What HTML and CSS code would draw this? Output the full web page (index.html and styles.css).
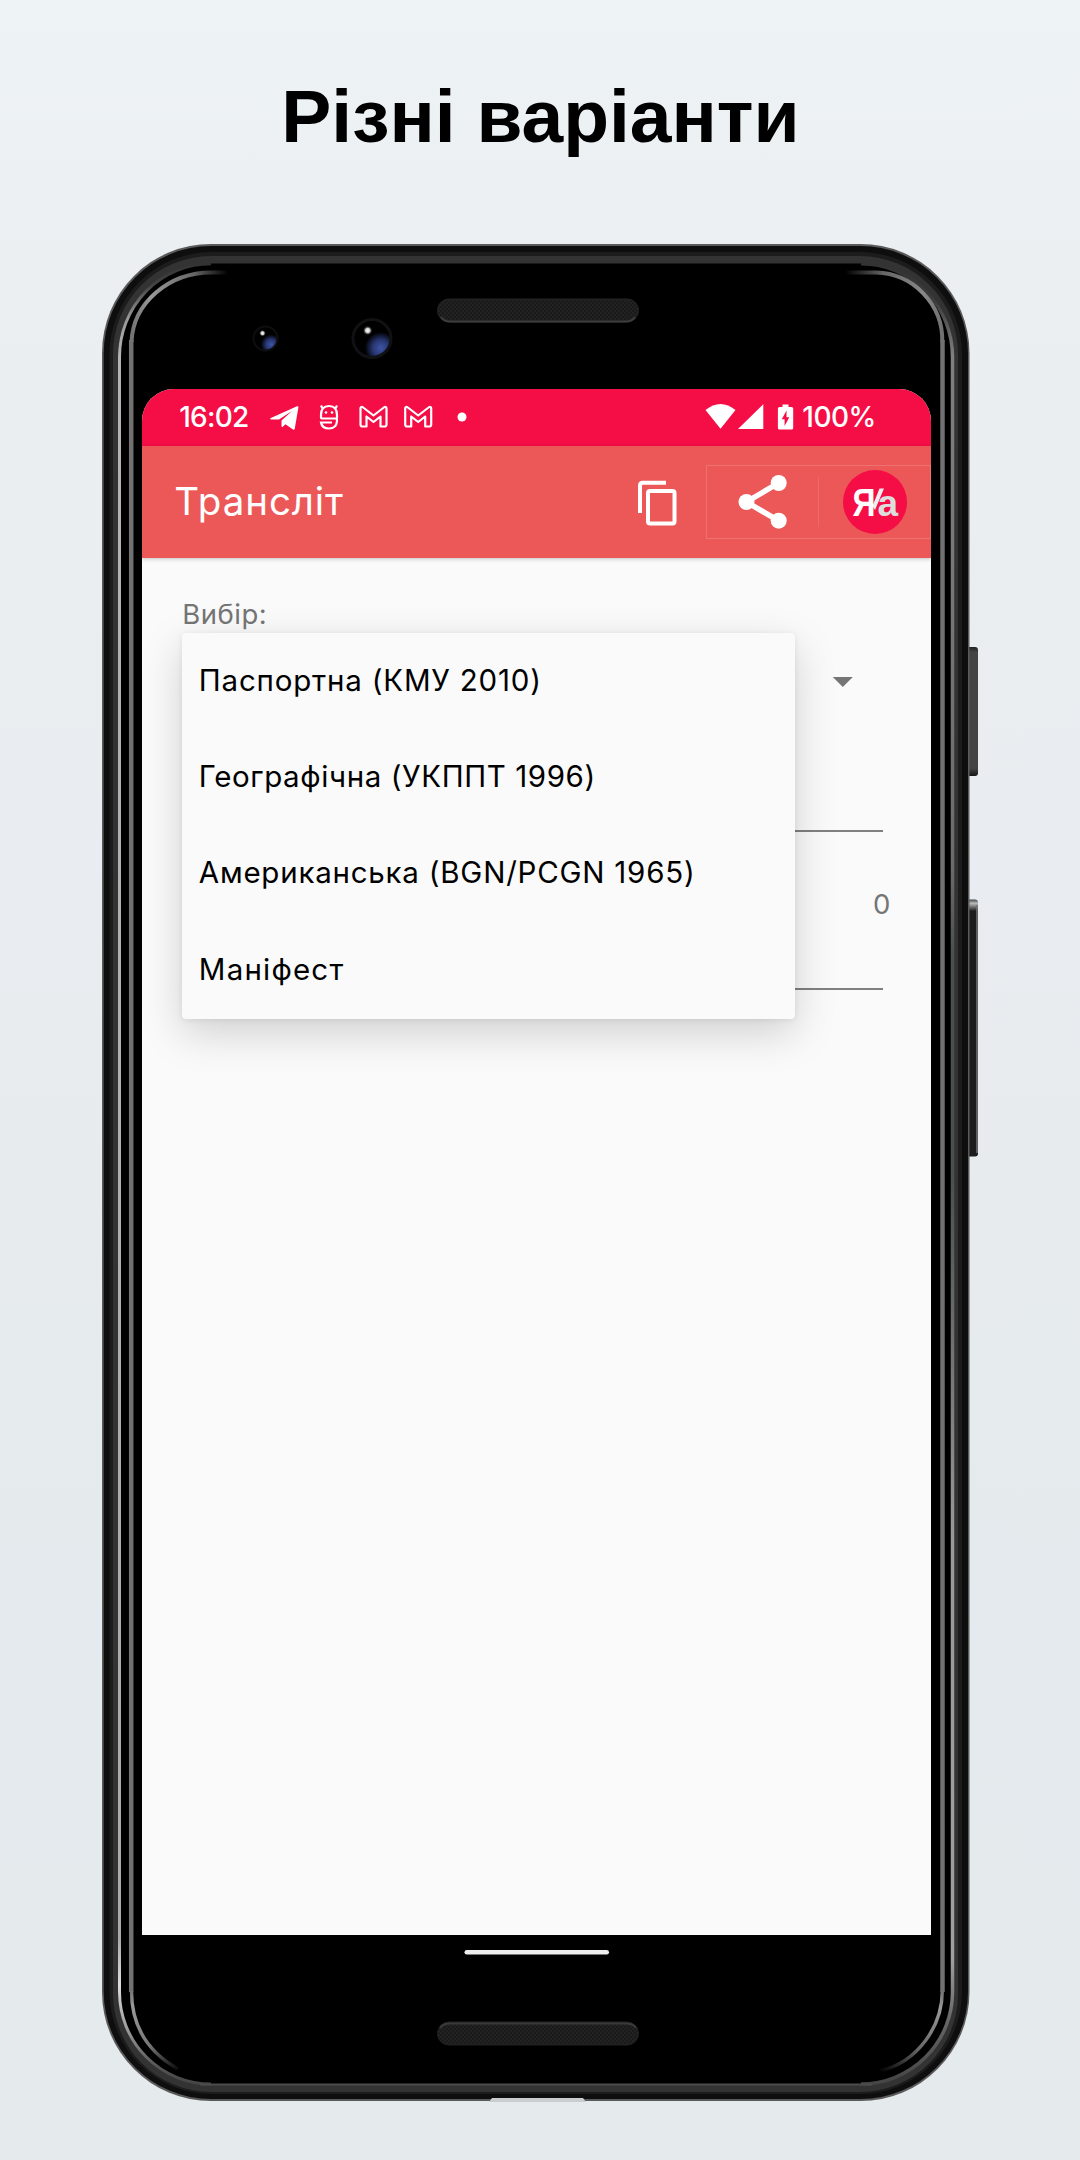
FILE: index.html
```html
<!DOCTYPE html>
<html lang="uk">
<head>
<meta charset="utf-8">
<title>Різні варіанти</title>
<link rel="stylesheet" href="styles.css">
</head>
<body>
<main class="page">
  <h1 class="headline">Різні варіанти</h1>
  <section class="phone">
    <svg class="frame" viewBox="102 244 878 1858" width="878" height="1858" aria-hidden="true">
      <defs>
        <linearGradient id="rimFade" gradientUnits="userSpaceOnUse" x1="0" y1="264" x2="0" y2="2085">
          <stop offset="0" stop-color="#333"/><stop offset=".012" stop-color="#444"/><stop offset=".03" stop-color="#999"/><stop offset=".05" stop-color="#b4b4b4"/>
          <stop offset=".92" stop-color="#aaa"/><stop offset=".945" stop-color="#ddd"/><stop offset=".97" stop-color="#999"/><stop offset=".99" stop-color="#555"/><stop offset="1" stop-color="#444"/>
        </linearGradient>
        <linearGradient id="rimRight" gradientUnits="userSpaceOnUse" x1="0" y1="264" x2="0" y2="2085">
          <stop offset="0" stop-color="#333"/><stop offset=".02" stop-color="#3c3c3c"/><stop offset=".05" stop-color="#808080"/><stop offset=".33" stop-color="#6c6c6c"/>
          <stop offset=".38" stop-color="#4a504c"/><stop offset=".5" stop-color="#4a504c"/><stop offset=".7" stop-color="#999"/><stop offset=".93" stop-color="#a0a0a0"/><stop offset=".965" stop-color="#666"/><stop offset="1" stop-color="#444"/>
        </linearGradient>
        <linearGradient id="glassLeft" gradientUnits="userSpaceOnUse" x1="228" y1="0" x2="131" y2="0">
          <stop offset="0" stop-color="#000"/><stop offset=".35" stop-color="#666"/><stop offset=".8" stop-color="#999"/><stop offset="1" stop-color="#717171"/>
        </linearGradient>
        <linearGradient id="glassLeftEnd" gradientUnits="userSpaceOnUse" x1="180" y1="2072" x2="131" y2="1990">
          <stop offset="0" stop-color="#000"/><stop offset=".4" stop-color="#777"/><stop offset=".85" stop-color="#999"/><stop offset="1" stop-color="#717171"/>
        </linearGradient>
        <linearGradient id="glassRight" gradientUnits="userSpaceOnUse" x1="845" y1="0" x2="942" y2="0">
          <stop offset="0" stop-color="#000"/><stop offset=".4" stop-color="#666"/><stop offset=".8" stop-color="#888"/><stop offset="1" stop-color="#717171"/>
        </linearGradient>
        <linearGradient id="glassRightEnd" gradientUnits="userSpaceOnUse" x1="880" y1="2072" x2="942" y2="1990">
          <stop offset="0" stop-color="#000"/><stop offset=".4" stop-color="#666"/><stop offset=".85" stop-color="#999"/><stop offset="1" stop-color="#717171"/>
        </linearGradient>
        <linearGradient id="keyTop" x1="0" y1="0" x2="0" y2="1">
          <stop offset="0" stop-color="#222"/><stop offset=".04" stop-color="#444"/><stop offset=".94" stop-color="#444"/><stop offset="1" stop-color="#151515"/>
        </linearGradient>
        <linearGradient id="keyLow" x1="0" y1="0" x2="0" y2="1">
          <stop offset="0" stop-color="#444"/><stop offset=".015" stop-color="#bbb"/><stop offset=".045" stop-color="#1c1c1c"/><stop offset="1" stop-color="#1c1c1c"/>
        </linearGradient>
        <radialGradient id="lens" cx=".73" cy=".75" r=".42">
          <stop offset="0" stop-color="#3f54a4"/><stop offset=".5" stop-color="#283773"/><stop offset="1" stop-color="#000"/>
        </radialGradient>
        <radialGradient id="glint">
          <stop offset="0" stop-color="#fff"/><stop offset=".45" stop-color="#ccc"/><stop offset="1" stop-color="#000" stop-opacity="0"/>
        </radialGradient>
        <pattern id="mesh" width="4" height="4" patternUnits="userSpaceOnUse">
          <rect width="4" height="4" fill="#1a1a1a"/><rect width="2" height="2" fill="#222"/><rect x="2" y="2" width="2" height="2" fill="#222"/>
        </pattern>
      </defs>
      <rect x="966" y="647" width="12" height="129" rx="3" fill="url(#keyTop)"/>
      <rect x="966" y="899.500" width="12" height="257" rx="3" fill="url(#keyLow)"/>
      <path d="M977 905V1153" stroke="#777" stroke-width="1.500"/>
      <rect x="102" y="244" width="867.500" height="1857" rx="109" fill="#5a5a5a"/>
      <rect x="103.700" y="246" width="864.300" height="1853" rx="107.500" fill="#0e0e0e"/>
      <rect x="109.500" y="252" width="852.500" height="1842" rx="102" fill="#1c1c1c"/>
      <rect x="113" y="256" width="845" height="1836" rx="98" fill="#333"/>
      <rect x="118" y="263.500" width="836" height="1820.500" rx="93" fill="#000"/>
      <path d="M211 263.800A91.500 93 0 0 0 119.500 357V1992A91.500 92 0 0 0 211 2084" fill="none" stroke="url(#rimFade)" stroke-width="3"/>
      <path d="M861 263.800A91.500 93 0 0 1 952.500 357V1992A91.500 92 0 0 1 861 2084" fill="none" stroke="url(#rimRight)" stroke-width="3.500"/>
      <path d="M200 2084.500H872" stroke="#4c4c4c" stroke-width="2"/>
      <path d="M131.200 340V1992" stroke="#717171" stroke-width="4.500"/>
      <path d="M228 272.500H212A80 72 0 0 0 131.500 342" fill="none" stroke="url(#glassLeft)" stroke-width="4"/>
      <path d="M131.500 1991C131.500 2026 148 2052 178 2069" fill="none" stroke="url(#glassLeftEnd)" stroke-width="3.400"/>
      <path d="M942.500 340V1992" stroke="#717171" stroke-width="4.500"/>
      <path d="M846 272.500H876A68 68 0 0 1 942.300 342" fill="none" stroke="url(#glassRight)" stroke-width="4"/>
      <path d="M942.300 1991C942.300 2026 918 2062 880 2071" fill="none" stroke="url(#glassRightEnd)" stroke-width="3.400"/>
      <circle cx="265.500" cy="338.500" r="12" fill="url(#lens)" stroke="#0e0e10" stroke-width="2"/>
      <circle cx="262.500" cy="333.200" r="3.500" fill="url(#glint)"/>
      <circle cx="372" cy="338.500" r="19" fill="url(#lens)" stroke="#111114" stroke-width="3"/>
      <circle cx="367.700" cy="330.500" r="5" fill="url(#glint)"/>
      <rect x="437.500" y="299" width="201" height="23" rx="11.500" fill="url(#mesh)" stroke="#252525"/>
      <path d="M441 317Q444 321.500 450 321.500H626Q632 321.500 635 317" fill="none" stroke="#3d3d3d" stroke-width="2"/>
      <rect x="437.500" y="2022" width="201" height="23" rx="11.500" fill="url(#mesh)" stroke="#222"/>
      <path d="M440 2028Q443 2023.500 450 2023.500H626Q633 2023.500 636 2028" fill="none" stroke="#3a3a3a" stroke-width="2"/>
      <rect x="464.500" y="1950" width="144.500" height="4.600" rx="2.300" fill="#eee"/>
      <path d="M489 2102L492 2098H583L586 2102Z" fill="#c9cdcf"/>
    </svg>

    <div class="screen">
      <header class="status">
        <span class="clock">16:02</span>
        <svg class="status-left" viewBox="268 402 202 32" width="202" height="32" aria-hidden="true">
          <path d="M270.300 419.300L297 407.300Q298.600 406.800 298.400 408.500L294.800 429.500Q294.300 431.500 292.600 430.300L285.500 425.200L282.800 427.800Q281.600 428.500 281.500 427V421.500L292 412L279 420.600L271 420.400Q269.800 420 270.300 419.300Z" fill="#fff"/>
          <g fill="none" stroke="#fff" stroke-width="2.200">
            <path d="M337 419.500V416Q337 407 329 407T321 416V418Q321 419.500 322.500 419.500H335.500Q337 419.500 337 421V422Q336.500 429.500 329 429.500Q322 429.500 321 423.500H332M322.500 409.500L321 406.500M335.500 409.500L337 406.500"/>
            <path id="mail" d="M360.500 409.500Q360.500 407.500 362.500 408L373.500 416.500L384.500 408Q386.500 407.500 386.500 409.500V425.500Q386.500 427.500 384.500 427.500H380.500V417.500L373.500 423L366.500 417.500V427.500H362.500Q360.500 427.500 360.500 425.500Z" stroke-linejoin="round"/>
            <use href="#mail" x="44.700"/>
          </g>
          <circle cx="326" cy="413.500" r="1.300" fill="#fff"/><circle cx="332" cy="413.500" r="1.300" fill="#fff"/>
          <circle cx="462" cy="418" r="4.500" fill="#fff"/>
        </svg>
        <svg class="status-right" viewBox="704 402 92 32" width="92" height="32" aria-hidden="true">
          <path d="M705.500 411Q720.500 399 735.500 411L720.500 429.800Z" fill="#fff"/>
          <path d="M738 430L763.300 405.300V430Z" fill="#fff"/>
          <path d="M782.500 408V405.500H788.500V408H791.500Q793.200 408 793.200 409.500V429Q793.200 430.500 791.500 430.500H779.500Q777.900 430.500 777.900 429V409.500Q777.900 408 779.500 408ZM786.500 411.500L781.800 420.200H784.600V427L789.300 418.200H786.500Z" fill="#fff" fill-rule="evenodd"/>
        </svg>
        <span class="charge">100%</span>
      </header>

      <div class="toolbar">
        <span class="title">Трансліт</span>
        <svg class="copy" viewBox="636 476 44 50" width="44" height="50" aria-hidden="true">
          <g fill="none" stroke="#fff" stroke-width="4"><path d="M640 512V484.500Q640 481.700 642.800 481.700H666"/><rect x="648" y="490" width="26.500" height="32.500" rx="2"/></g>
        </svg>
        <div class="actions">
          <svg class="share" viewBox="736 472 54 60" width="54" height="60" aria-hidden="true">
            <path d="M778.500 483L746.500 502L778.500 520.700" fill="none" stroke="#fff" stroke-width="5.500"/>
            <g fill="#fff"><circle cx="778.700" cy="483" r="8"/><circle cx="746.500" cy="502" r="8"/><circle cx="778.700" cy="520.700" r="8"/></g>
          </svg>
          <span class="divider"></span>
          <svg class="logo" viewBox="0 0 64 64" width="64" height="64">
            <circle cx="32" cy="32" r="32" fill="#f50d46"/>
            <path d="M29.500 36L36.500 18.500H41L32 40Z" fill="#eee"/>
            <text class="logo-ya" x="9.500" y="46" textLength="23" lengthAdjust="spacingAndGlyphs">Я</text>
            <text class="logo-a" x="34.500" y="46">а</text>
          </svg>
        </div>
      </div>

      <div class="content">
        <div class="label">Вибір:</div>
        <div class="spinner"><span class="caret"></span></div>
        <div class="field"></div>
        <div class="counter">0</div>
        <div class="field field-out"></div>
        <ul class="menu">
          <li class="passport">Паспортна (КМУ 2010)</li>
          <li class="geographic">Географічна (УКППТ 1996)</li>
          <li class="american">Американська (BGN/PCGN 1965)</li>
          <li class="manifest">Маніфест</li>
        </ul>
      </div>
    </div>
  </section>
</main>
</body>
</html>
```
FILE: styles.css
```css
* { box-sizing: border-box; }
body { margin: 0; font-family: Inter, Roboto, sans-serif; }
.page {
  width: 1080px;
  height: 2160px;
  overflow: hidden;
  background: linear-gradient(#eef3f5 0, #ebeff1 12%, #e9edf1 40%, #e7ebee 55%, #e4eaed 75%, #e5eaed 100%);
}
.headline {
  height: 244px;
  margin: 0;
  padding-left: 1px;
  text-align: center;
  font: bold 77px/232px "Liberation Sans", Arial, sans-serif;
  font-size: 75px;
  color: #000;
}
.phone {
  position: relative;
  width: 868px;
  height: 1857px;
  margin-left: 102px;
  padding: 145px 0 0 40.300px;
}
.frame { position: absolute; left: 0; top: 0; }
.screen {
  position: relative;
  display: flex;
  flex-direction: column;
  width: 789px;
  height: 1546px;
  overflow: hidden;
  border-radius: 32px 32px 0 0;
  background: #fafafa;
}
.status {
  display: flex;
  align-items: center;
  height: 56.500px;
  padding: 0 0 0 37px;
  background: #f50d46;
  color: #fff;
  font-weight: 500;
  font-size: 28px;
}
.clock { width: 89px; letter-spacing: -.8px; }
.status-left { margin-right: 234px; }
.status-right { margin-right: 6px; }
.charge { white-space: nowrap; letter-spacing: -.5px; }
.toolbar {
  position: relative;
  z-index: 1;
  display: flex;
  align-items: center;
  height: 112.500px;
  padding-left: 32px;
  background: #ec5858;
  color: #fff;
  box-shadow: 0 1px 4px rgba(0, 0, 0, .22);
}
.title { width: 462px; padding-bottom: 1px; font-size: 38.500px; letter-spacing: .9px; }
.copy { margin-right: 26px; flex: none; }
.actions {
  display: flex;
  align-items: center;
  flex: 1;
  height: 74px;
  padding-left: 29px;
  border: 1px solid rgba(255, 255, 255, .16);
}
.divider { width: 1px; height: 50px; margin: 0 24px 0 28px; background: rgba(255, 255, 255, .1); }
.share, .logo { flex: none; }
.logo-ya { font: bold 38px "Liberation Sans", sans-serif; fill: #fff; }
.logo-a { font: bold 37px "Liberation Sans", sans-serif; fill: #ddd; }
.content { position: relative; flex: 1; padding: 38px 48.500px 0 40px; color: #757575; }
.label { height: 37px; font-size: 27.500px; line-height: 37px; letter-spacing: .5px; }
.spinner { display: flex; justify-content: flex-end; padding: 44px 30px 0 0; height: 138px; }
.caret { width: 20px; height: 10px; background: #757575; clip-path: polygon(0 0, 100% 0, 50% 100%); }
.field { height: 61px; border-bottom: 2px solid #808080; }
.counter { height: 96px; margin-right: -7.500px; padding-top: 54px; text-align: right; font-size: 27.500px; line-height: 37px; }
.field-out { height: 62px; }
.menu {
  position: absolute;
  left: 40px;
  top: 74.500px;
  width: 612.500px;
  height: 386px;
  margin: 0;
  padding: 0 0 0 16.500px;
  list-style: none;
  border-radius: 4px;
  background: #fafafa;
  color: #000;
  font-size: 29.500px;
  box-shadow: 0 14px 42px rgba(0, 0, 0, .17), 0 1px 6px rgba(0, 0, 0, .08);
}
.menu li { height: 96.400px; line-height: 95.500px; white-space: nowrap; }
.passport { letter-spacing: .8px; }
.geographic { letter-spacing: .6px; }
.american { letter-spacing: .77px; }
.manifest { letter-spacing: 1.200px; }
```
